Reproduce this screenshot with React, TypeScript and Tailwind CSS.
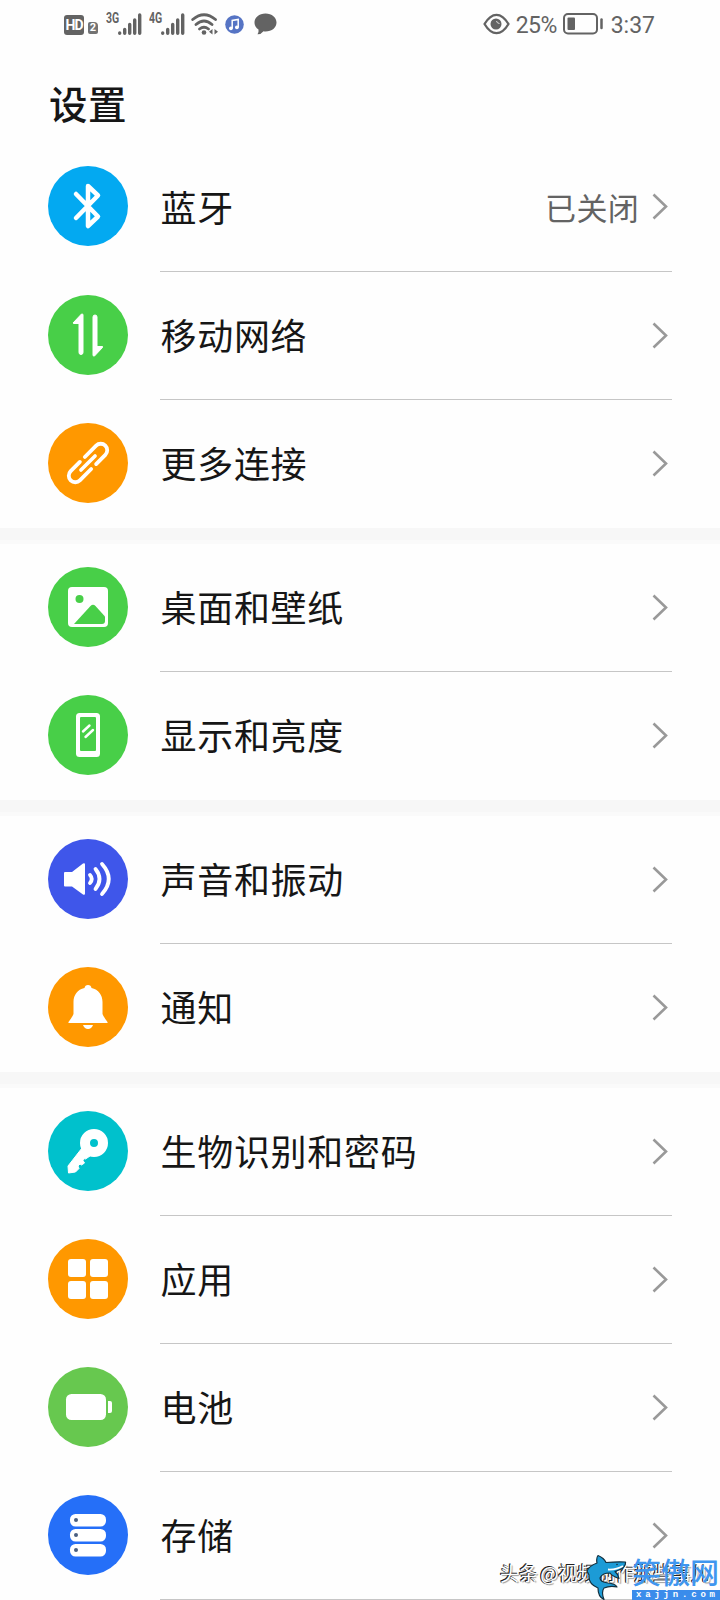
import React from 'react';
import clsx from 'clsx';

interface SettingItem {
  label: string;
  color: string;
  icon: React.ReactNode;
  value?: string;
}

const BluetoothIcon = () => (
  <path d="M28 28 L50 50.5 L40 60 V20 L50 29.5 L28 52" fill="none" stroke="#fff" strokeWidth="4.5" strokeLinecap="round" strokeLinejoin="round" />
);

const MobileIcon = () => (
  <g fill="#fff" stroke="#fff" strokeWidth="1" strokeLinejoin="round">
    <path d="M25 28 L33.5 19 Q35 18.5 35 20 V57.5 Q35 59.5 33 59.5 Q31 59.5 31 57.5 V28.5 H25.5 Z" />
    <path d="M45 22 Q45 20 47 20 Q49 20 49 22 V51.5 H54.5 Q55 52 54.5 52.5 L46.5 61 Q45 61.5 45 60 Z" />
  </g>
);

const LinkIcon = () => (
  <g transform="rotate(-45 40 40)" fill="none" stroke="#fff" strokeWidth="3.8" strokeLinecap="round" strokeLinejoin="round">
    <path d="M38 46.5 H22 A6.5 6.5 0 0 1 22 33.5 H35" />
    <path d="M42 33.5 H58 A6.5 6.5 0 0 1 58 46.5 H45" />
    <path d="M30 40 H50" strokeWidth="3.6" />
  </g>
);

const PictureIcon = () => (
  <>
    <rect x="20" y="20" width="40" height="40" rx="4" fill="#fff" />
    <circle cx="31.5" cy="32" r="4" fill="#48cf48" />
    <path d="M26 57 L42.5 39 Q45 36.5 47.5 39 L57 49.5 V54 Q57 57 54 57 Z" fill="#48cf48" />
  </>
);

const DisplayIcon = () => (
  <>
    <rect x="28" y="18" width="24" height="44" rx="3.5" fill="#fff" />
    <rect x="32" y="22" width="16" height="34" rx="1" fill="#48cf48" />
    <path d="M35 36.5 L41.5 30.5 M37.5 42 L45 35" fill="none" stroke="#fff" strokeWidth="2.4" strokeLinecap="round" />
  </>
);

const SoundIcon = () => (
  <>
    <path d="M17 33 H24 L35 24.5 Q37 23.5 37 25.5 V54.5 Q37 56.5 35 55.5 L24 47.5 H17 Q16 47.5 16 46.5 V34 Q16 33 17 33 Z" fill="#fff" />
    <g fill="none" stroke="#fff" strokeWidth="3.8" strokeLinecap="round">
      <path d="M42 36 Q45.5 40 42 44" />
      <path d="M47.5 30 Q55.5 40 47.5 50" />
      <path d="M54 25 Q67.5 40 54 55" />
    </g>
  </>
);

const BellIcon = () => (
  <g fill="#fff">
    <path d="M36.5 21 Q37 18 40 18 Q43 18 43.5 21 C50.5 22.5 54.5 28 54.5 35 V47 Q56 50.5 59.5 55 Q60 56 58.5 56 H21.5 Q20 56 20.5 55 Q24 50.5 25.5 47 V35 C25.5 28 29.5 22.5 36.5 21 Z" />
    <path d="M35 58 H45 Q43.5 62 40 62 Q36.5 62 35 58 Z" />
  </g>
);

const KeyIcon = () => (
  <>
    <path d="M34 37 L42 45 L37.5 48 L36.5 47.5 L35 49.5 L36.5 52 L33.5 54 L32 53 L30 55 L31 57.5 L27.5 61 L20.5 62 L20 55 Z" fill="#fff" stroke="#fff" strokeWidth="1" strokeLinejoin="round" />
    <circle cx="46" cy="32" r="9" fill="none" stroke="#fff" strokeWidth="10" />
  </>
);

const AppsIcon = () => (
  <g fill="#fff">
    <rect x="20" y="20" width="18" height="18" rx="3" />
    <rect x="42" y="20" width="18" height="18" rx="3" />
    <rect x="20" y="42" width="18" height="18" rx="3" />
    <rect x="42" y="42" width="18" height="18" rx="3" />
  </g>
);

const BatteryIcon = () => (
  <g fill="#fff">
    <rect x="18" y="27" width="40" height="26" rx="5.5" />
    <path d="M60 34 H62 Q64 34 64 36 V44 Q64 46 62 46 H60 Z" />
  </g>
);

const StorageIcon = () => (
  <>
    {[19, 34, 49].map((y) => (
      <g key={y}>
        <rect x="22" y={y} width="36" height="12.5" rx="5.5" fill="#fff" />
        <circle cx="28" cy={y + 6} r="2" fill="#4a5f80" />
      </g>
    ))}
  </>
);

const GROUPS: SettingItem[][] = [
  [
    { label: '蓝牙', color: 'bg-[#03a9f1]', icon: <BluetoothIcon />, value: '已关闭' },
    { label: '移动网络', color: 'bg-[#48cf48]', icon: <MobileIcon /> },
    { label: '更多连接', color: 'bg-[#ff9800]', icon: <LinkIcon /> },
  ],
  [
    { label: '桌面和壁纸', color: 'bg-[#48cf48]', icon: <PictureIcon /> },
    { label: '显示和亮度', color: 'bg-[#48cf48]', icon: <DisplayIcon /> },
  ],
  [
    { label: '声音和振动', color: 'bg-[#3f56ea]', icon: <SoundIcon /> },
    { label: '通知', color: 'bg-[#ff9800]', icon: <BellIcon /> },
  ],
  [
    { label: '生物识别和密码', color: 'bg-[#00c1cc]', icon: <KeyIcon /> },
    { label: '应用', color: 'bg-[#ff9800]', icon: <AppsIcon /> },
    { label: '电池', color: 'bg-[#67c84f]', icon: <BatteryIcon /> },
    { label: '存储', color: 'bg-[#256ff8]', icon: <StorageIcon /> },
  ],
];

const Signal = ({ type }: { type: string }) => (
  <div className="flex h-[22px] items-start">
    <span className="w-3 origin-left scale-x-[0.7] text-[15px] leading-[11px] font-bold">{type}</span>
    <svg width="24" height="22" viewBox="0 0 24 22" fill="none" stroke="currentColor" strokeWidth="3.4" strokeLinecap="round">
      <path d="M1.7 20.2 V20 M6.7 20.2 V16.5 M11.7 20.2 V11.5 M16.7 20.2 V7 M21.7 20.2 V2" />
    </svg>
  </div>
);

const StatusBar = () => (
  <div className="flex h-12 items-center justify-between pr-[65px] pl-16 font-[Roboto,sans-serif] text-[#636363]">
    <div className="flex h-[22px] items-start">
      <div className="mt-0.5 flex h-5 w-5 items-center justify-center rounded-[3px] bg-[#636363] text-[14px] font-bold tracking-[-1px] text-white">HD</div>
      <div className="mt-[9px] ml-1 flex h-3 w-[10px] items-center justify-center rounded-[2px] rounded-tr-[4px] bg-[#737373] text-[11px] font-bold text-white">2</div>
      <div className="ml-2"><Signal type="3G" /></div>
      <div className="ml-[7px]"><Signal type="4G" /></div>
      <svg className="ml-[6px]" width="28" height="22" viewBox="0 0 28 22" fill="none" stroke="currentColor" strokeWidth="2.8" strokeLinecap="round">
        <path d="M1.7 6.5 Q13 -3 24.5 6.5 M5 11.5 Q13 4.5 21 11.5 M8.5 16 Q13 12.5 17.5 16" />
        <circle cx="13" cy="19.5" r="2.3" fill="currentColor" stroke="none" />
        <path d="M21.5 16 V21.5 L18 18.8 Z M23.5 16 V21.5 L27 18.8 Z" fill="currentColor" stroke="none" />
      </svg>
      <svg className="mt-0.5 ml-[6px]" width="19" height="19" viewBox="0 0 19 19">
        <circle cx="9.5" cy="9.5" r="9.3" fill="#5674c4" />
        <path d="M7.2 13.2 V5.4 L13.2 4.4 V12.2" fill="none" stroke="#fff" strokeWidth="1.5" />
        <circle cx="5.9" cy="13.3" r="1.9" fill="#fff" />
        <circle cx="11.9" cy="12.3" r="1.9" fill="#fff" />
      </svg>
      <svg className="ml-[10px]" width="23" height="22" viewBox="0 0 23 22" fill="currentColor">
        <path d="M11.5 0.5 C18 0.5 22.5 4.5 22.5 9.5 C22.5 14.5 18 18.5 11.5 18.5 Q10.5 18.5 9.5 18.3 Q7 21.5 3.5 21.3 Q5 19 4.5 16.5 C2 15 0.5 12.5 0.5 9.5 C0.5 4.5 5 0.5 11.5 0.5 Z" />
      </svg>
    </div>
    <div className="flex items-center text-[23px] leading-none">
      <svg width="27" height="22" viewBox="0 0 27 22" fill="none" stroke="currentColor">
        <path d="M1.5 11 Q7 1.8 13.5 1.8 Q20 1.8 25.5 11 Q20 20.2 13.5 20.2 Q7 20.2 1.5 11 Z" strokeWidth="2.3" strokeLinejoin="round" />
        <circle cx="13" cy="11" r="5.5" fill="currentColor" stroke="none" />
        <path d="M13.5 8 Q13.8 10.3 16.5 10.5" strokeWidth="1" stroke="#ddd" />
      </svg>
      <span className="mt-0.5 ml-1.5 w-[43px] tracking-[-0.5px]">25%</span>
      <svg className="ml-1" width="41" height="22" viewBox="0 0 41 22" fill="none" stroke="currentColor">
        <rect x="1" y="1" width="33" height="19.5" rx="4" strokeWidth="2" />
        <rect x="4.5" y="4.5" width="7.5" height="12.5" rx="1" fill="currentColor" stroke="none" />
        <path d="M38.5 6.5 V15" strokeWidth="2.5" strokeLinecap="round" />
      </svg>
      <span className="mt-0.5 ml-[7px]">3:37</span>
    </div>
  </div>
);

const SettingRow = ({ item, divider }: { item: SettingItem; divider: boolean }) => (
  <div className="flex h-32 pl-12">
    <div className={clsx('h-20 w-20 shrink-0 rounded-full', item.value ? 'mt-[22px]' : 'mt-[23px]', item.color)}>
      <svg width="80" height="80" viewBox="0 0 80 80">{item.icon}</svg>
    </div>
    <div className={clsx('mr-12 ml-8 flex flex-1 items-center border-b', divider ? 'border-[#c6c6c6]' : 'border-transparent')}>
      <span className="flex-1 pb-[3px] pl-[0.5px] text-[36px] leading-none tracking-[0.7px] text-[#161616]">{item.label}</span>
      {item.value && <span className="mr-[13px] pb-[3px] text-[31px] leading-none tracking-[0.3px] text-[#636363]">{item.value}</span>}
      <svg className={clsx('mr-1', item.value ? 'mb-[3px]' : 'mb-px')} width="16" height="27" viewBox="0 0 16 27" fill="none" stroke="#999" strokeWidth="2.6">
        <path d="M1.5 1.5 L14 13.5 L1.5 25.5" />
      </svg>
    </div>
  </div>
);

const Watermark = () => (
  <>
    <div className="absolute top-[1561px] left-[500px] text-[19px] leading-6 whitespace-nowrap text-white [word-spacing:-2px] [text-shadow:-1px_-1px_0_#222,-1px_0_0_#222,1px_1px_1px_#999]">
      头条 @视频制作那些事儿
    </div>
    <svg className="absolute top-[1554px] left-[584px]" width="44" height="46" viewBox="0 0 44 46" fill="#1c9bd6" stroke="#12303f" strokeWidth="1.2" strokeLinejoin="round">
      <path d="M13 9 Q12 4 14 1.5 Q20 4 22 8.5 Q33 7.5 41.5 8 Q42 13 35 16 L31 17.5 Q34 20 35 24.5 Q28 22 26 19 Q18 19 16 24 Q16 28 24 29 Q31 29.5 33 33 Q26 31.5 20 34 Q17 38 20 45.5 Q14 43 14 34 Q4 30 5 21 L3 17 Q5 12 13 9 Z" />
      <path d="M24 15.5 Q32 16 39 12" fill="none" stroke="#fff" strokeWidth="1.8" />
      <circle cx="33" cy="10.5" r="0.8" fill="#12303f" stroke="none" />
    </svg>
    <div className="absolute top-[1554px] left-[632px] w-[88px] text-[#3f96ef]">
      <div className="h-[36px] text-[29px] leading-[34px] font-medium whitespace-nowrap">笑傲网</div>
      <div className="h-[10px] bg-[#3a8ceb] pl-1 font-['Liberation_Mono',monospace] text-[9px] leading-[10px] font-bold tracking-[3.8px] whitespace-nowrap text-white">xajjn.com</div>
    </div>
  </>
);

export default function App() {
  return (
    <div className="relative h-[1600px] w-[720px] overflow-hidden bg-[#fefefe] font-['Noto_Sans_CJK_SC',sans-serif]">
      <StatusBar />
      <h1 className="h-24 pt-[34px] pl-[49px] text-[38.5px] leading-[40px] font-medium tracking-[0.5px] text-[#161616]">设置</h1>
      {GROUPS.map((group, index) => (
        <React.Fragment key={index}>
          {index > 0 && <div className="h-4 border-b-4 border-[#fafafa] bg-[#f7f7f7]" />}
          {group.map((item, i) => (
            <SettingRow key={item.label} item={item} divider={i < group.length - 1 || index === GROUPS.length - 1} />
          ))}
        </React.Fragment>
      ))}
      <Watermark />
    </div>
  );
}
